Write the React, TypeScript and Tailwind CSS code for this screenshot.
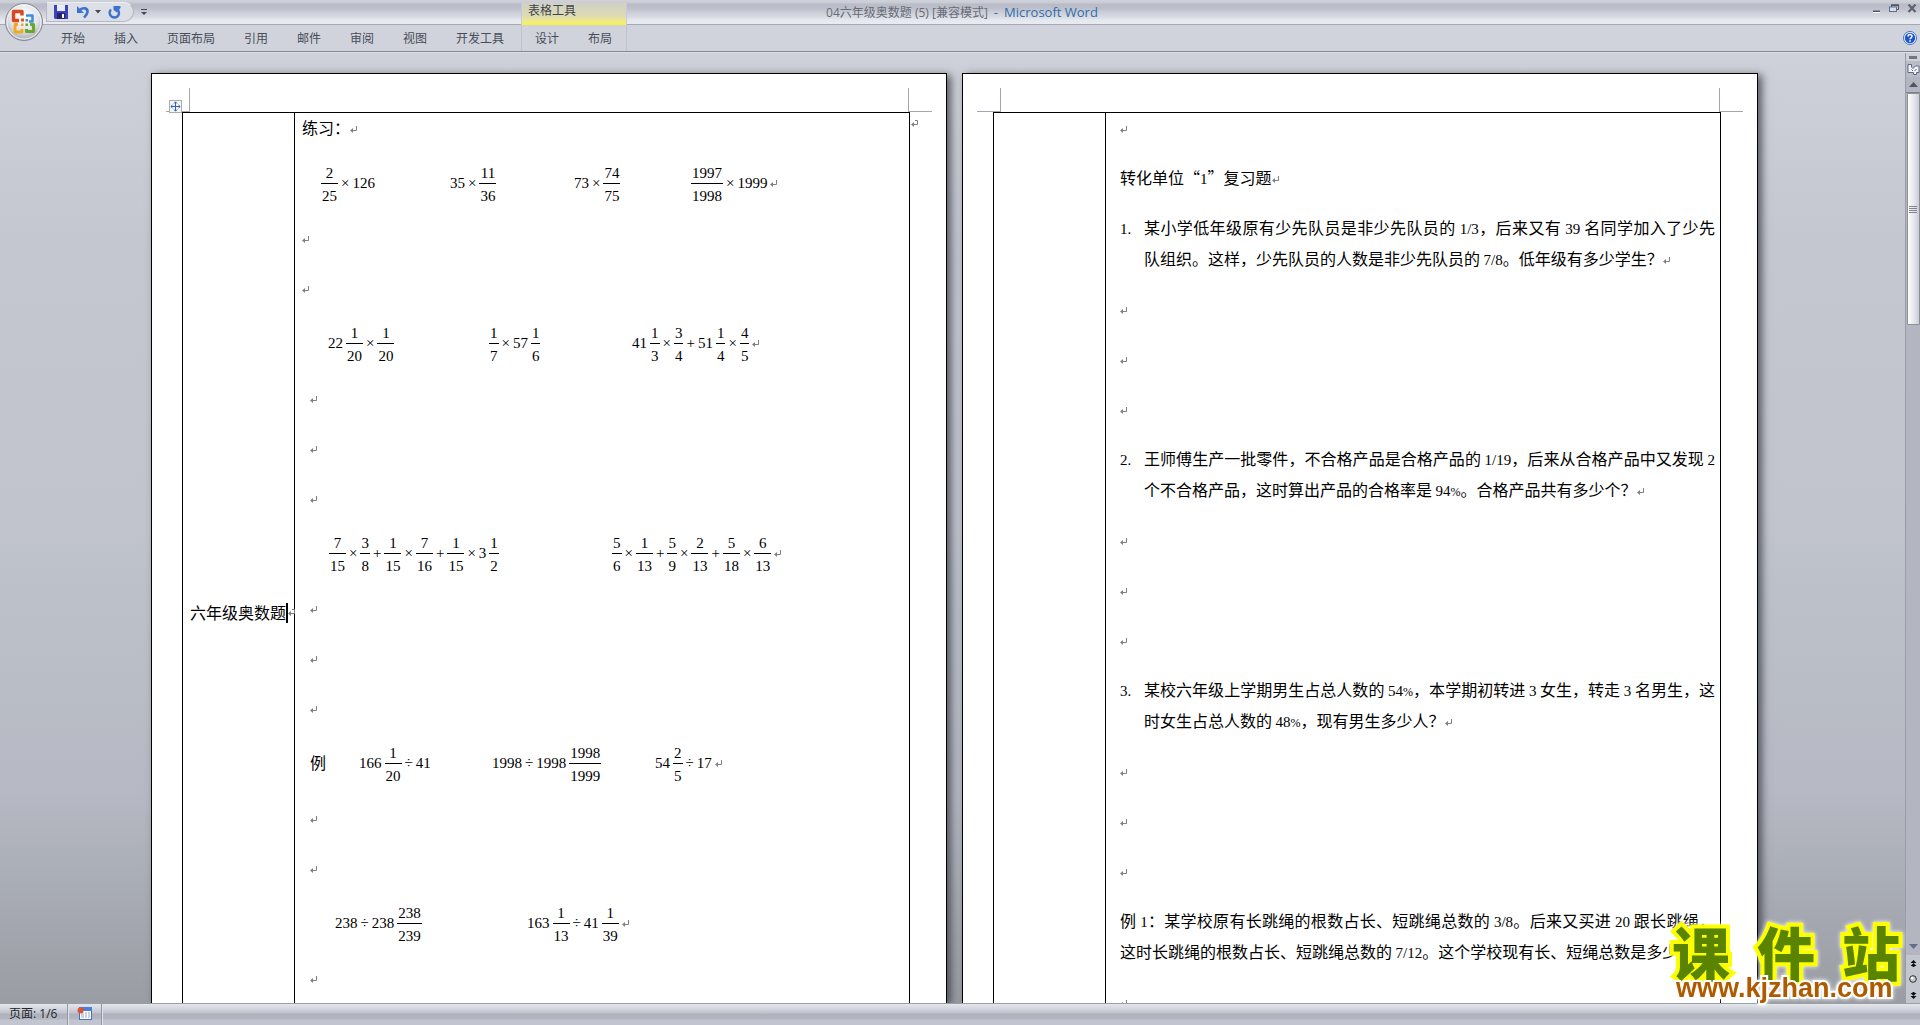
import { Fragment, ReactNode } from 'react'

type Part = string | [string, string]

interface Equation {
  parts: Part[]
  width?: string
}

const tabs = ['开始', '插入', '页面布局', '引用', '邮件', '审阅', '视图', '开发工具']

const row1: Equation[] = [
  { parts: [['2', '25'], '×', '126'], width: 'w-[129px]' },
  { parts: ['35', '×', ['11', '36']], width: 'w-[124px]' },
  { parts: ['73', '×', ['74', '75']], width: 'w-[117px]' },
  { parts: [['1997', '1998'], '×', '1999'] },
]

const row2: Equation[] = [
  { parts: ['22', ['1', '20'], '×', ['1', '20']], width: 'w-[161px]' },
  { parts: [['1', '7'], '×', '57', ['1', '6']], width: 'w-[143px]' },
  { parts: ['41', ['1', '3'], '×', ['3', '4'], '+', '51', ['1', '4'], '×', ['4', '5']] },
]

const row3: Equation[] = [
  {
    parts: [['7', '15'], '×', ['3', '8'], '+', ['1', '15'], '×', ['7', '16'], '+', ['1', '15'], '×', '3', ['1', '2']],
    width: 'w-[283px]',
  },
  {
    parts: [['5', '6'], '×', ['1', '13'], '+', ['5', '9'], '×', ['2', '13'], '+', ['5', '18'], '×', ['6', '13']],
  },
]

const row4: Equation[] = [
  { parts: ['166', ['1', '20'], '÷', '41'], width: 'w-[133px]' },
  { parts: ['1998', '÷', '1998', ['1998', '1999']], width: 'w-[163px]' },
  { parts: ['54', ['2', '5'], '÷', '17'] },
]

const row5: Equation[] = [
  { parts: ['238', '÷', '238', ['238', '239']], width: 'w-[192px]' },
  { parts: ['163', ['1', '13'], '÷', '41', ['1', '39']] },
]

const ReturnMark = () => (
  <svg className="inline-block shrink-0" width="8" height="8" viewBox="0 0 8 8" fill="none" aria-hidden="true">
    <path d="M6.5 0V4.5H1" stroke="#808080" />
    <path d="M0 4.5L3 2V7Z" fill="#808080" />
  </svg>
)

const CellMark = () => (
  <svg className="inline-block shrink-0" width="8" height="8" viewBox="0 0 8 8" fill="none" aria-hidden="true">
    <path d="M4 .5H6.5V4.5H1" stroke="#808080" />
    <path d="M0 4.5L3 2V7Z" fill="#808080" />
  </svg>
)

const Fraction = ({ top, bottom }: { top: string; bottom: string }) => (
  <span className="flex flex-col text-center">
    <span className="border-b border-black px-px pt-0.5 leading-5">{top}</span>
    <span className="px-px pt-0.5 leading-5">{bottom}</span>
  </span>
)

const EquationRow = ({ items, children }: { items: Equation[]; children?: ReactNode }) => (
  <div className="mb-[19px] flex h-[41px] items-center">
    {children}
    {items.map((eq, i) => (
      <div
        key={i}
        className={`flex shrink-0 items-center gap-[3px] font-['Liberation_Serif',serif] text-[15px] ${eq.width ?? ''}`}
      >
        {eq.parts.map((p, j) => (
          <Fragment key={j}>
            {typeof p === 'string' ? <span>{p}</span> : <Fraction top={p[0]} bottom={p[1]} />}
          </Fragment>
        ))}
        {i === items.length - 1 && <ReturnMark />}
      </div>
    ))}
  </div>
)

const Blank = ({ count = 1 }: { count?: number }) => (
  <>
    {Array.from({ length: count }, (_, i) => (
      <p key={i} className="mb-[19px] flex h-[31px] items-center pt-[3px]">
        <ReturnMark />
      </p>
    ))}
  </>
)

// numbers are set in the serif face, everything else in the CJK one
const Mixed = ({ text }: { text: string }) => (
  <>
    {text.split(/([0-9/.]+|%)/).map((t, i) =>
      i % 2 ? (
        <span
          key={i}
          className={`font-['Liberation_Serif',serif] ${t === '%' ? 'text-xs leading-none' : 'text-[15px] leading-none'}`}
        >
          {t}
        </span>
      ) : (
        t
      )
    )}
  </>
)

const Para = ({ text, mark = true }: { text: string; mark?: boolean }) => (
  <p className="-mt-px mb-5 text-justify leading-[31px]">
    <Mixed text={text} />
    {mark && <ReturnMark />}
  </p>
)

const Question = ({ no, text }: { no: number; text: string }) => (
  <div className="-mt-px mb-5 flex leading-[31px]">
    <span className="w-6 shrink-0"><Mixed text={`${no}.`} /></span>
    <p className="flex-1 text-justify">
      <Mixed text={text} />
      <ReturnMark />
    </p>
  </div>
)

interface SheetProps {
  side: ReactNode
  mark?: boolean
  handle?: boolean
  pad: string
  children: ReactNode
}

const Sheet = ({ side, mark, handle, pad, children }: SheetProps) => (
  <section className="w-[796px] shrink-0 border border-b-0 border-black bg-white shadow-[4px_2px_8px_rgba(50,52,62,0.75)]">
    <div className="flex h-[38px] items-end justify-between px-3.5">
      <div className="relative h-6 w-6 border-r border-b border-[#a5a5b5]">
        {handle && (
          <svg className="absolute -bottom-0.5 left-[3px]" width="13" height="13" viewBox="0 0 13 13" aria-hidden="true">
            <rect x=".5" y=".5" width="12" height="12" fill="#f6f6f0" stroke="#a9adaf" />
            <path d="M6.5 2V11M2 6.5H11" stroke="#2f5fc6" />
            <path
              d="M5 3.5L6.5 1.8 8 3.5M5 9.5L6.5 11.2 8 9.5M3.5 5L1.8 6.5 3.5 8M9.5 5L11.2 6.5 9.5 8"
              fill="none"
              stroke="#2f5fc6"
            />
          </svg>
        )}
      </div>
      <div className="h-6 w-6 border-b border-l border-[#a5a5b5]" />
    </div>
    <div className="flex items-start pl-[30px]">
      <table className="w-[728px] table-fixed border-collapse font-['Noto_Sans_CJK_SC',sans-serif] text-base text-black">
        <tbody>
          <tr>
            <td className="w-28 border border-black px-[7px] align-top">{side}</td>
            <td className={`border border-black pr-[5px] align-top ${pad}`}>{children}</td>
          </tr>
        </tbody>
      </table>
      {mark && <span className="mt-2 ml-px flex"><CellMark /></span>}
    </div>
  </section>
)

const OfficeButton = () => (
  <button type="button" aria-label="Office" className="absolute top-0.5 left-1 z-10">
    <svg width="40" height="40" viewBox="0 0 40 40">
      <defs>
        <radialGradient id="orb" cx="50%" cy="35%" r="65%">
          <stop offset="0" stopColor="#ffffff" />
          <stop offset=".6" stopColor="#e2e4ea" />
          <stop offset="1" stopColor="#a4a8b2" />
        </radialGradient>
      </defs>
      <circle cx="20" cy="20" r="18.5" fill="url(#orb)" stroke="#858a96" />
      <circle cx="20" cy="20" r="17" fill="none" stroke="#f5f6f8" />
      <g fill="none" strokeLinejoin="round">
        <path d="M15 18.500H9.500V9.500H18V13.500" stroke="#d8481a" strokeWidth="3.400" />
        <path d="M22 13.500H28.500V19.500H25" stroke="#3f8ee0" strokeWidth="2.600" />
        <path d="M14 22.500H11V30H18V27" stroke="#f6a81c" strokeWidth="2.800" />
        <path d="M26 22.500H29.500V29.500H22.500V27" stroke="#6aa82c" strokeWidth="3.200" />
      </g>
      <rect x="17" y="16.500" width="3" height="3" fill="#e2551c" />
      <rect x="21.500" y="17" width="2.500" height="2.500" fill="#3f8ee0" />
      <rect x="17" y="21.500" width="2.500" height="2.500" fill="#f6a81c" />
      <rect x="21.500" y="21.500" width="2.500" height="2.500" fill="#6aa82c" />
    </svg>
  </button>
)

const QuickAccess = () => (
  <div className="flex items-center pt-0.5 pl-[46px]">
    <div className="flex h-5 items-center rounded-r-full border border-[#b4b8c2] border-t-[#eceef3] bg-[#dcdfe6] pr-3 pl-[7px]">
      <button type="button" aria-label="保存">
        <svg width="14" height="14" viewBox="0 0 14 14">
          <path d="M0 0H14V14H1L0 13Z" fill="#3c43b8" />
          <rect x="3" y="0" width="8" height="6" fill="#e6ecfa" />
          <rect x="3" y="8" width="8" height="6" fill="#22256e" />
          <rect x="8" y="9" width="2" height="4" fill="#fff" />
        </svg>
      </button>
      <button type="button" aria-label="撤消" className="ml-[9px]">
        <svg width="13" height="14" viewBox="0 0 13 14">
          <path d="M3 5C6 2 11 3 10.500 7 10.200 9.500 8.500 11 7 12.500" fill="none" stroke="#3d73cf" strokeWidth="2.600" />
          <path d="M0 1V8H7Z" fill="#3d73cf" />
        </svg>
      </button>
      <button type="button" aria-label="撤消列表" className="ml-[5px]">
        <svg width="6" height="4" viewBox="0 0 6 4"><path d="M0 0H6L3 3.500Z" fill="#444954" /></svg>
      </button>
      <button type="button" aria-label="重复" className="ml-[7px]">
        <svg width="13" height="14" viewBox="0 0 13 14">
          <path d="M3 4.500C0 8 2.500 12.500 6.500 12.500S12.500 8 9.500 4.500" fill="none" stroke="#3d73cf" strokeWidth="2.400" />
          <path d="M5.500 1H12.500V3L9 7.500 5.500 5Z" fill="#3d73cf" />
        </svg>
      </button>
    </div>
    <button type="button" aria-label="自定义快速访问工具栏" className="ml-[7px]">
      <svg width="6" height="7" viewBox="0 0 6 7"><path d="M0 .5H6" stroke="#444954" /><path d="M0 3H6L3 6Z" fill="#444954" /></svg>
    </button>
  </div>
)

const WindowButtons = () => (
  <div className="flex items-start justify-end gap-2 pt-1 pr-[3px]">
    <button type="button" aria-label="最小化" className="pt-1.5">
      <svg width="9" height="3" viewBox="0 0 9 3"><path d="M1 .5H8V2H1Z" fill="#4f5562" /><path d="M1 2.500H8" stroke="#fff" /></svg>
    </button>
    <button type="button" aria-label="还原">
      <svg width="10" height="9" viewBox="0 0 10 9">
        <path d="M2.500 3V1H9.500V5.500H8" fill="none" stroke="#4f5562" />
        <path d="M2 .5H10V2H2Z" fill="#4f5562" />
        <rect x=".5" y="3" width="7" height="4.500" fill="#d9dce4" stroke="#5c6f94" />
      </svg>
    </button>
    <button type="button" aria-label="关闭">
      <svg width="10" height="9" viewBox="0 0 10 9">
        <path d="M1.500 .5L8.500 8M8.500 .5L1.500 8" stroke="#5b6270" strokeWidth="2.200" />
      </svg>
    </button>
  </div>
)

const TitleBar = () => (
  <header className="grid h-[25px] shrink-0 grid-cols-[1fr_auto_1fr] border-b border-[#a6a9b3] bg-[linear-gradient(#cfd2da_0,#c8cbd4_3px,#b9bcc6_4px,#bcbfc9_8px,#cdd0d8_13px,#d9dbe3_17px,#e6e8f0_20px,#e9ebf3_24px)]">
    <div className="flex">
      <div className="w-[521px]">
        <QuickAccess />
      </div>
      <div className="mt-0.5 w-[106px] border-x border-[#c8cadb] bg-[linear-gradient(#cfcfc9,#dedcb2_60%,#f0eb86_85%,#fbf23c)] pl-1.5 text-xs leading-[18px] text-[#3f4450]">
        表格工具
      </div>
    </div>
    <h1 className="flex gap-1.5 pl-1 text-[13px] leading-[25px] whitespace-nowrap text-[#2f6cab]">
      <span className="text-xs leading-[25px] text-[#666b77]">04六年级奥数题 (5) [兼容模式]</span>
      <span>-</span>
      <span>Microsoft Word</span>
    </h1>
    <WindowButtons />
  </header>
)

const Ribbon = () => (
  <nav className="flex h-[27px] shrink-0 items-stretch border-b border-[#84878f] bg-[#d0d3dc] text-xs text-[#474c58]">
    <div className="flex w-[521px] gap-[29px] pt-0.5 pl-[61px]">
      {tabs.map((t) => (
        <button key={t} type="button" className="whitespace-nowrap">{t}</button>
      ))}
    </div>
    <div className="flex w-[106px] gap-[29px] border-x border-[#bfc2d0] pt-0.5 pl-[13px]">
      <button type="button">设计</button>
      <button type="button">布局</button>
    </div>
    <button type="button" aria-label="帮助" className="ml-auto pr-[3px]">
      <svg width="14" height="14" viewBox="0 0 14 14">
        <circle cx="7" cy="7" r="6.500" fill="#fff" stroke="#3c74c4" />
        <circle cx="7" cy="7" r="5.200" fill="#1d55cf" />
        <path d="M5 5.500C5 3 9 3 9 5.300 9 6.800 7 6.800 7 8.300" fill="none" stroke="#fff" strokeWidth="1.500" />
        <rect x="6.200" y="9.300" width="1.600" height="1.500" fill="#fff" />
      </svg>
    </button>
  </nav>
)

const ScrollBar = () => (
  <aside className="flex w-[15px] shrink-0 flex-col items-center border-l border-[#9a9da8] bg-[#b3b6c0]">
    <div className="flex h-2 w-full items-center justify-center bg-[#cdd0d8]">
      <span className="h-[3px] w-2 bg-[#73767e]" />
    </div>
    <button type="button" aria-label="标尺" className="flex h-4 w-full items-center justify-center bg-[#b9bcc6]">
      <svg width="13" height="13" viewBox="0 0 13 13" fill="#f2f3f8" stroke="#596b88">
        <path d="M1 1.500H4.500V4L6 5.500 8.500 3H12V9.500H9.500V11.500H6.500V9.500H1Z" />
        <path d="M4.500 6.500L6 8M7.500 8L9.500 6" fill="none" />
      </svg>
    </button>
    <button type="button" aria-label="向上滚动" className="flex h-4 w-full items-center justify-center border-b border-[#7e828d]">
      <svg width="9" height="5" viewBox="0 0 9 5"><path d="M0 5L4.500 0 9 5Z" fill="#4f5665" /></svg>
    </button>
    <div className="flex h-[232px] w-[13px] flex-col items-center justify-center gap-px rounded-[1px] border border-[#8c8f9a] bg-[linear-gradient(90deg,#fffff4,#eef0f5_30%,#e2e4ea_60%,#c9ccd5)]">
      <span className="h-px w-2 bg-[#7f838d]" />
      <span className="h-px w-2 bg-[#7f838d]" />
      <span className="h-px w-2 bg-[#7f838d]" />
      <span className="h-px w-2 bg-[#7f838d]" />
    </div>
    <div className="mt-auto flex w-full flex-col items-center">
      <button type="button" aria-label="向下滚动" className="flex h-[17px] items-center">
        <svg width="9" height="5" viewBox="0 0 9 5"><path d="M0 0L4.500 5 9 0Z" fill="#5f7089" /></svg>
      </button>
      <button type="button" aria-label="前一页" className="flex h-4 w-full items-center justify-center bg-[#c3c6cf]">
        <svg width="7" height="7" viewBox="0 0 7 7"><path d="M3.500 0L6.500 3H0.500ZM3.500 3L6.500 6H4.500V7H2.500V6H.5Z" fill="#111" /></svg>
      </button>
      <button type="button" aria-label="选择浏览对象" className="flex h-4 w-full items-center justify-center bg-[#c3c6cf]">
        <svg width="8" height="8" viewBox="0 0 8 8"><circle cx="4" cy="4" r="3.300" fill="#c9c9c9" stroke="#2c2c2c" /><circle cx="3" cy="3" r="1.300" fill="#fff" /></svg>
      </button>
      <button type="button" aria-label="下一页" className="flex h-4 w-full items-center justify-center bg-[#c3c6cf]">
        <svg width="7" height="7" viewBox="0 0 7 7"><path d="M3.500 7L6.500 4H0.500ZM3.500 4L6.500 1H4.500V0H2.500V1H.5Z" fill="#111" /></svg>
      </button>
    </div>
  </aside>
)

const StatusBar = () => (
  <footer className="flex h-[22px] shrink-0 items-stretch border-t border-[#9b9ea6] bg-[linear-gradient(#e3e6ea_0,#d5d8df_4px,#c0c3cd_9px,#aeb1bb_10px,#b4b7c1_15px,#c2c5cf_16px)] text-xs leading-5 text-[#22252c]">
    <span className="w-[68px] border-r border-[#9497a1] pl-[9px] whitespace-nowrap">页面: 1/6</span>
    <button type="button" aria-label="宏录制" className="flex w-[34px] items-start border-r border-l border-r-[#9497a1] border-l-[#dfe1e7] pt-[3px] pl-2">
      <svg width="15" height="13" viewBox="0 0 15 13">
        <rect x="2.500" y=".5" width="12" height="12" fill="#fff" stroke="#4a6fb5" />
        <rect x="2" y="0" width="13" height="4" fill="#4b7ed8" />
        <path d="M4 6H7M8 6H10M11 6H13M4 8H7M8 8H10M11 8H13M4 10H7M8 10H10M11 10H13" stroke="#8da6d0" />
        <circle cx="3.500" cy="3.500" r="3" fill="#e0522a" />
      </svg>
    </button>
    <span className="border-l border-[#dfe1e7]" />
  </footer>
)

const Watermark = () => (
  <div className="absolute right-[20px] bottom-[23px] w-[228px] font-bold drop-shadow-[0_0_2px_#ffffff]">
    <div className="flex h-[46px] items-center justify-between font-['Noto_Sans_CJK_SC',sans-serif] text-[58px] leading-[46px] font-black text-[#5a8400] [paint-order:stroke] [-webkit-text-stroke:8px_#fcff00]">
      <span>课</span>
      <span>件</span>
      <span>站</span>
    </div>
    <div className="pl-1 font-['Liberation_Sans',sans-serif] text-[27px] leading-7 text-[#b05a00] [paint-order:stroke] [-webkit-text-stroke:4px_#ffffff]">
      www.kjzhan.com
    </div>
  </div>
)

export default function App() {
  return (
    <div
      lang="zh-CN"
      className="relative flex h-screen flex-col overflow-hidden bg-[#c4c7d0] font-['Open_Sans','Noto_Sans_CJK_SC',sans-serif]"
    >
      <OfficeButton />
      <TitleBar />
      <Ribbon />
      <div className="flex min-h-0 flex-1 border-t border-[#dfe1e7]">
        <main className="flex min-w-0 flex-1 justify-center gap-[15px] overflow-hidden bg-[linear-gradient(#ced1d9,#c8cbd3_12%,#c4c7d0_20%,#c1c4cd_50%,#bcc1ca_55%,#b9bdc6_67%,#b6b9c3_78%,#abafb7_86%,#a2a5ad_93%,#9a9da3)] pt-5 pl-1">
          <Sheet
            mark
            handle
            pad="pl-[7px]"
            side={
              <div className="flex items-center pt-[484px] leading-[31px] whitespace-nowrap">
                六年级奥数题
                <span className="h-5 w-0.5 shrink-0 bg-black" />
                <span className="-mr-2 flex"><CellMark /></span>
              </div>
            }
          >
            <Para text="练习：" />
            <EquationRow items={row1}><span className="w-[19px]" /></EquationRow>
            <Blank count={2} />
            <EquationRow items={row2}><span className="w-[26px]" /></EquationRow>
            <div className="pl-2"><Blank count={3} /></div>
            <EquationRow items={row3}><span className="w-[27px]" /></EquationRow>
            <div className="pl-2"><Blank count={3} /></div>
            <EquationRow items={row4}><span className="w-[57px] pb-[3px] pl-2">例</span></EquationRow>
            <div className="pl-2"><Blank count={2} /></div>
            <EquationRow items={row5}><span className="w-[33px]" /></EquationRow>
            <div className="pl-2"><Blank count={2} /></div>
          </Sheet>
          <Sheet side={null} pad="pl-[14px]">
            <Blank />
            <Para text="转化单位“1”复习题" />
            <Question
              no={1}
              text="某小学低年级原有少先队员是非少先队员的 1/3，后来又有 39 名同学加入了少先队组织。这样，少先队员的人数是非少先队员的 7/8。低年级有多少学生？"
            />
            <Blank count={3} />
            <Question
              no={2}
              text="王师傅生产一批零件，不合格产品是合格产品的 1/19，后来从合格产品中又发现 2 个不合格产品，这时算出产品的合格率是 94%。合格产品共有多少个？"
            />
            <Blank count={3} />
            <Question
              no={3}
              text="某校六年级上学期男生占总人数的 54%，本学期初转进 3 女生，转走 3 名男生，这时女生占总人数的 48%，现有男生多少人？"
            />
            <Blank count={3} />
            <Para
              mark={false}
              text="例 1：某学校原有长跳绳的根数占长、短跳绳总数的 3/8。后来又买进 20 跟长跳绳，这时长跳绳的根数占长、短跳绳总数的 7/12。这个学校现有长、短绳总数是多少"
            />
            <Blank />
          </Sheet>
        </main>
        <ScrollBar />
      </div>
      <StatusBar />
      <Watermark />
    </div>
  )
}
